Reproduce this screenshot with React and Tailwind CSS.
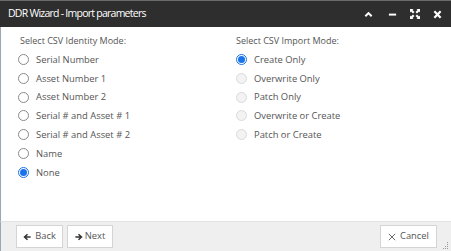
import React from "react";

function Radio({ checked, disabled, label }) {
  return (
    <div className="flex items-center h-[18.85px]">
      <span
        className={
          "w-[11px] h-[11px] rounded-full border flex items-center justify-center shrink-0 " +
          (checked
            ? "border-[#1a73e8] bg-white"
            : disabled
            ? "border-[#dadada] bg-[#f3f3f3]"
            : "border-[#8a8a8a] bg-white")
        }
      >
        {checked && <span className="w-[7px] h-[7px] rounded-full bg-[#1a73e8]" />}
      </span>
      <span className="ml-[7px] text-[9.4px] leading-none text-[#555]">{label}</span>
    </div>
  );
}

function Arrow({ dir }) {
  return (
    <svg width="8" height="8" viewBox="0 0 10 10" className={dir === "right" ? "rotate-180" : ""}>
      <path d="M0.5 5 L5 0.8 L6.3 2.1 L4.2 4.1 H9.5 V5.9 H4.2 L6.3 7.9 L5 9.2 Z" fill="#333" />
    </svg>
  );
}

export default function App() {
  const font = { fontFamily: '"Open Sans", "Liberation Sans", sans-serif' };
  return (
    <div className="w-[451px] h-[251px] flex flex-col bg-white overflow-hidden" style={font}>
      <div className="h-[27px] bg-[#2e2e2e] flex items-center pl-[8px] pr-[9px] shrink-0 border-t border-[#6a6a6a]">
        <span className="text-white text-[10.5px] tracking-[-0.75px]">DDR Wizard - Import parameters</span>
        <div className="ml-auto flex items-center text-white">
          <svg width="9" height="9" viewBox="0 0 10 10"><path d="M1.5 7 L5 3.5 L8.5 7" stroke="white" strokeWidth="2.2" fill="none" /></svg>
          <svg width="9" height="9" viewBox="0 0 10 10" className="ml-[15px]"><rect x="1" y="4" width="8" height="2.2" fill="white" /></svg>
          <svg width="10" height="10" viewBox="0 0 10 10" fill="white" className="ml-[13px]">
            <path d="M0 0h3.5l-1 1 2 2-1.5 1.5-2-2-1 1z" />
            <path d="M10 0v3.5l-1-1-2 2-1.5-1.5 2-2-1-1z" />
            <path d="M0 10v-3.5l1 1 2-2 1.5 1.5-2 2 1 1z" />
            <path d="M10 10h-3.5l1-1-2-2 1.5-1.5 2 2 1-1z" />
          </svg>
          <svg width="9" height="9" viewBox="0 0 10 10" className="ml-[13px]"><path d="M1.5 1.5 L8.5 8.5 M8.5 1.5 L1.5 8.5" stroke="white" strokeWidth="2.4" /></svg>
        </div>
      </div>
      <div className="flex-1 flex border-l border-[#9aa8b2]">
        <div className="w-[216px] pl-[17px] pt-[7px]">
          <div className="text-[9px] text-[#555] h-[14px] leading-[14px] mb-[2px] pl-[2px]">Select CSV Identity Mode:</div>
          <Radio label="Serial Number" />
          <Radio label="Asset Number 1" />
          <Radio label="Asset Number 2" />
          <Radio label="Serial # and Asset # 1" />
          <Radio label="Serial # and Asset # 2" />
          <Radio label="Name" />
          <Radio checked label="None" />
        </div>
        <div className="pl-[19px] pt-[7px]">
          <div className="text-[9px] text-[#555] h-[14px] leading-[14px] mb-[2px]">Select CSV Import Mode:</div>
          <Radio checked label="Create Only" />
          <Radio disabled label="Overwrite Only" />
          <Radio disabled label="Patch Only" />
          <Radio disabled label="Overwrite or Create" />
          <Radio disabled label="Patch or Create" />
        </div>
      </div>
      <div className="relative h-[30px] bg-[#efefef] border-t border-[#e2e2e2] border-l border-l-[#9aa8b2] flex items-center pl-[15px] pr-[14px] shrink-0">
        <button className="h-[23px] w-[47px] bg-white border border-[#d4d4d4] flex items-center justify-center text-[9.4px] text-[#555]">
          <Arrow dir="left" />
          <span className="ml-[4px]">Back</span>
        </button>
        <button className="ml-[4px] h-[23px] w-[46px] bg-white border border-[#d4d4d4] flex items-center justify-center text-[9.4px] text-[#555]">
          <Arrow dir="right" />
          <span className="ml-[2px]">Next</span>
        </button>
        <button className="ml-auto h-[23px] w-[57px] bg-white border border-[#d4d4d4] flex items-center justify-center text-[9.4px] text-[#555]">
          <svg width="8" height="8" viewBox="0 0 10 10"><path d="M1 1 L9 9 M9 1 L1 9" stroke="#555" strokeWidth="1.1" /></svg>
          <span className="ml-[4px]">Cancel</span>
        </button>
        <svg width="6" height="8" viewBox="0 0 6 8" className="absolute right-[2px] bottom-[1px]">
          <rect x="4" y="0" width="1" height="1" fill="#999" />
          <rect x="4" y="2" width="1" height="1" fill="#999" />
          <rect x="2" y="4" width="1" height="1" fill="#999" />
          <rect x="4" y="4" width="1" height="1" fill="#999" />
          <rect x="0" y="6" width="1" height="1" fill="#999" />
          <rect x="2" y="6" width="1" height="1" fill="#999" />
          <rect x="4" y="6" width="1" height="1" fill="#999" />
        </svg>
      </div>
    </div>
  );
}
